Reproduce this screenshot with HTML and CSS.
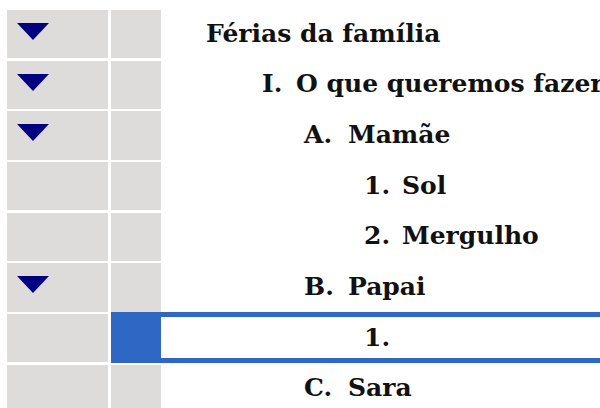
FILE: index.html
```html
<!DOCTYPE html>
<html lang="pt">
<head>
<meta charset="utf-8">
<title>Férias da família</title>
<link rel="stylesheet" href="styles.css">
</head>
<body>
<div class="outline">
  <div class="row">
    <div class="cell toggle"><span class="tri"></span></div>
    <div class="cell mark"></div>
    <div class="content lv0"><span class="txt">Férias da família</span></div>
  </div>
  <div class="row">
    <div class="cell toggle"><span class="tri"></span></div>
    <div class="cell mark"></div>
    <div class="content lv1"><span class="num n1">I.</span><span class="txt">O que queremos fazer</span></div>
  </div>
  <div class="row">
    <div class="cell toggle"><span class="tri"></span></div>
    <div class="cell mark"></div>
    <div class="content lv2"><span class="num n2">A.</span><span class="txt">Mamãe</span></div>
  </div>
  <div class="row">
    <div class="cell toggle"></div>
    <div class="cell mark"></div>
    <div class="content lv3"><span class="num n3">1.</span><span class="txt">Sol</span></div>
  </div>
  <div class="row">
    <div class="cell toggle"></div>
    <div class="cell mark"></div>
    <div class="content lv3"><span class="num n3">2.</span><span class="txt">Mergulho</span></div>
  </div>
  <div class="row">
    <div class="cell toggle"><span class="tri"></span></div>
    <div class="cell mark"></div>
    <div class="content lv2"><span class="num n2">B.</span><span class="txt">Papai</span></div>
  </div>
  <div class="row selected">
    <div class="cell toggle"></div>
    <div class="cell mark"></div>
    <div class="content lv3"><span class="num n3">1.</span><span class="txt"></span></div>
  </div>
  <div class="row">
    <div class="cell toggle"></div>
    <div class="cell mark"></div>
    <div class="content lv2"><span class="num n2">C.</span><span class="txt">Sara</span></div>
  </div>
</div>
</body>
</html>
```
FILE: styles.css
```css
html, body {
  margin: 0;
  padding: 0;
  background: #ffffff;
  overflow: hidden;
}

body {
  width: 600px;
  height: 408px;
  font-family: "DejaVu Serif", "Liberation Serif", serif;
  font-weight: bold;
  font-size: 25px;
  color: #111111;
}

.outline {
  display: grid;
  grid-template-columns: 101px 50.5px 1fr;
  grid-auto-rows: 48.3px;
  column-gap: 2.5px;
  row-gap: 2.4px;
  padding: 10px 0 0 7px;
}

.row {
  display: contents;
}

.cell {
  background: #dddcdb;
}

.toggle {
  position: relative;
}

.tri {
  position: absolute;
  left: 10px;
  top: 13px;
  width: 0;
  height: 0;
  border-left: 16.5px solid transparent;
  border-right: 16.5px solid transparent;
  border-top: 17px solid #000080;
}

.content {
  display: flex;
  align-items: center;
  white-space: nowrap;
  margin-left: -2.5px;
  padding-bottom: 2px;
  box-sizing: border-box;
}

.lv0 { padding-left: 45px; }
.lv1 { padding-left: 101px; }
.lv2 { padding-left: 143px; }
.lv3 { padding-left: 203px; }

.num { display: inline-block; }
.n1 { width: 34px; }
.n2 { width: 44px; }
.n3 { width: 38px; }

.selected .mark {
  background: #2f67c4;
  margin: -2px 0 -1px 0;
}

.selected .content {
  margin-top: -2px;
  margin-bottom: -1px;
  margin-right: -10px;
  border-top: 5px solid #2f67c4;
  border-bottom: 5px solid #2f67c4;
  background: #ffffff;
  padding-bottom: 0;
}
```
